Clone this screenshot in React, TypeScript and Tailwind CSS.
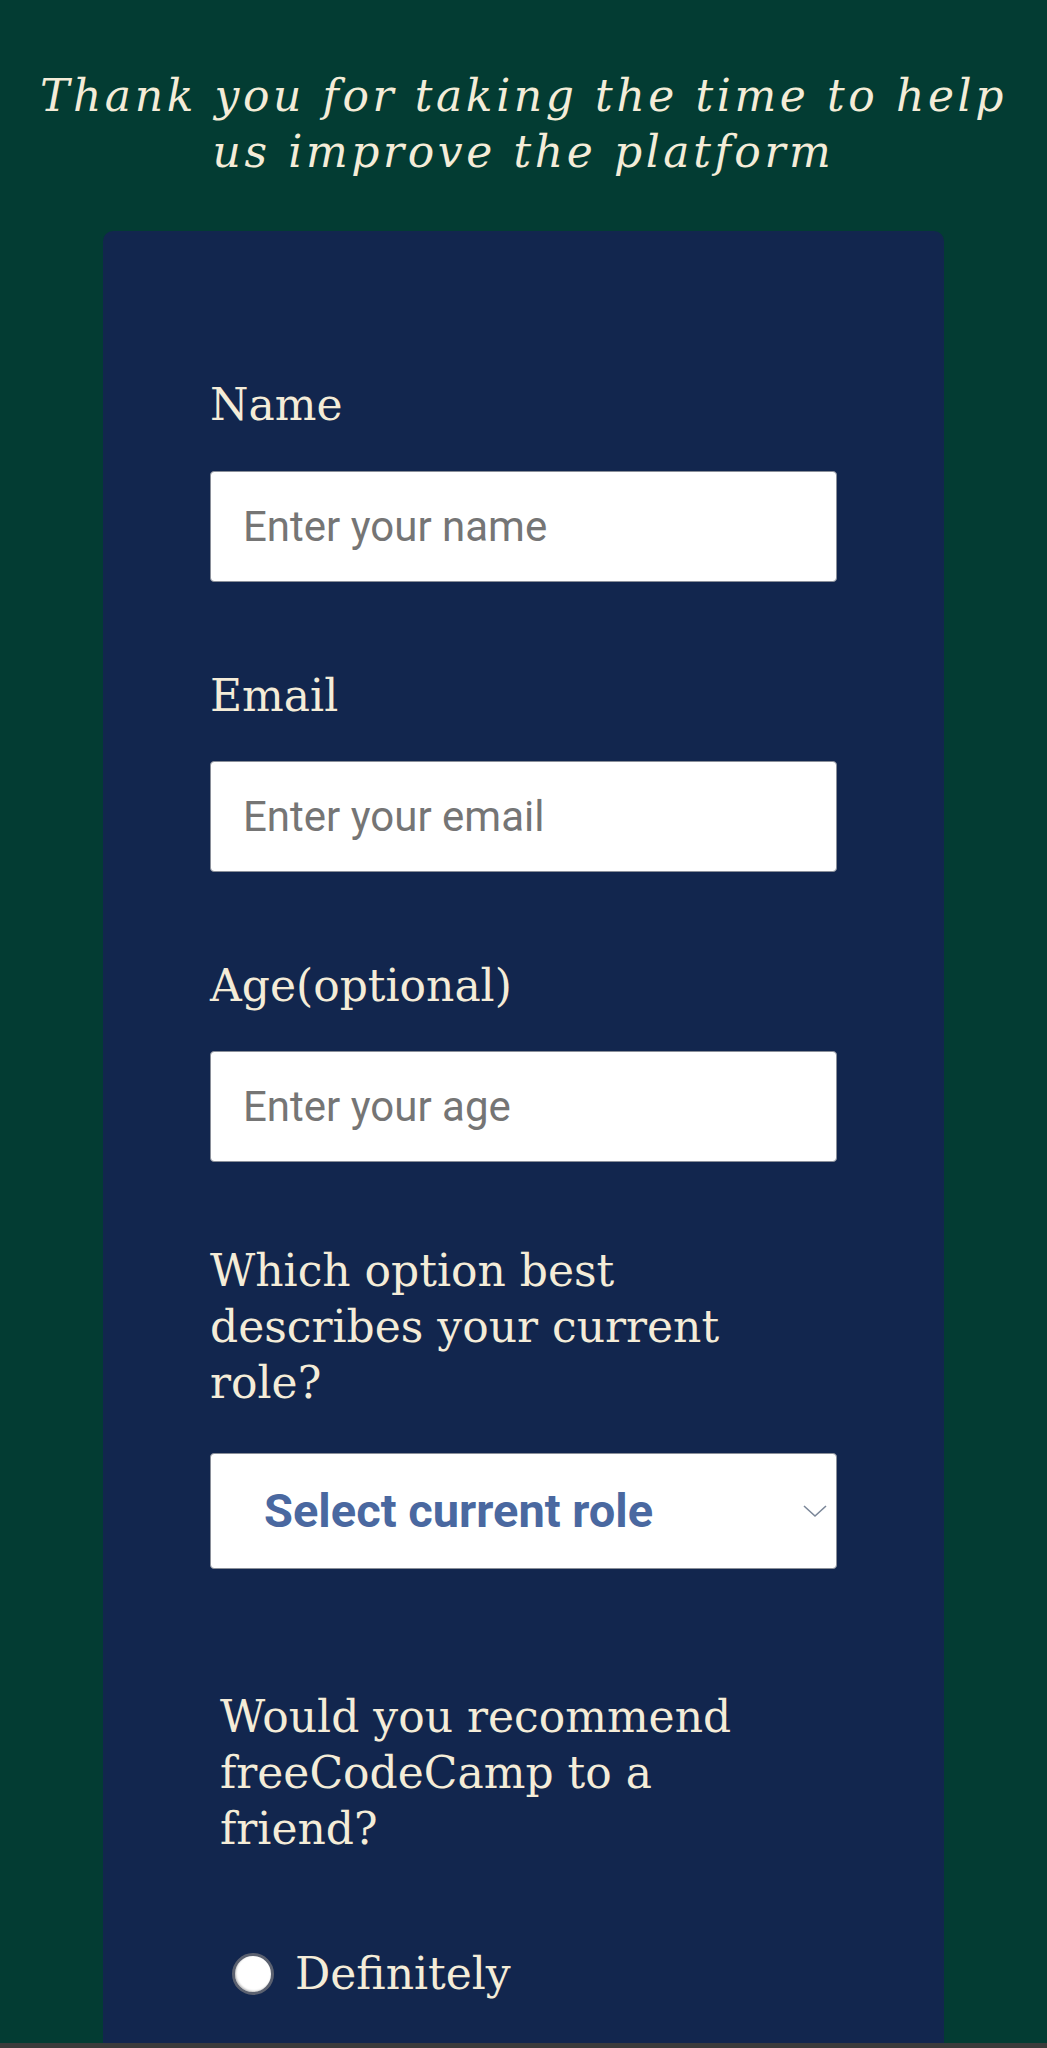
import React from 'react';

const serif = "font-['DejaVu_Serif',serif]";
const roboto = "font-['Roboto',sans-serif]";

const Label: React.FC<{ htmlFor: string; children: React.ReactNode; className?: string }> = ({ htmlFor, children, className }) => (
  <label htmlFor={htmlFor} className={`block ${serif} text-[44px] leading-[56px] text-[#f4ecd8] ${className || ''}`}>
    {children}
  </label>
);

const TextInput: React.FC<{ id: string; type: string; placeholder: string }> = ({ id, type, placeholder }) => (
  <input
    id={id}
    type={type}
    placeholder={placeholder}
    className={`block w-full h-[111px] px-[32px] bg-white rounded-[4px] border border-[#8a8f99] ${roboto} text-[42px] text-[#222] placeholder:text-[#757575] outline-none`}
  />
);

export default function App() {
  return (
    <div className="h-[2048px] flex flex-col overflow-hidden bg-[#033c33]">
      <div className="flex-1 overflow-hidden">
        {/* Header */}
        <h1 className={`pt-[68px] px-4 text-center ${serif} italic font-normal text-[44px] leading-[56px] tracking-[3.6px] text-[#f4ecd8]`}>
          Thank you for taking the time to help us improve the platform
        </h1>

        {/* Survey card */}
        <form className="mx-[103px] mt-[51px] bg-[#12264e] rounded-[10px] pt-[146px] pb-20 px-[107px]">
          <Label htmlFor="name">Name</Label>
          <div className="mt-[38px]">
            <TextInput id="name" type="text" placeholder="Enter your name" />
          </div>

          <Label htmlFor="email" className="mt-[86px]">Email</Label>
          <div className="mt-[37px]">
            <TextInput id="email" type="email" placeholder="Enter your email" />
          </div>

          <Label htmlFor="age" className="mt-[86px]">Age(optional)</Label>
          <div className="mt-[37px]">
            <TextInput id="age" type="number" placeholder="Enter your age" />
          </div>

          <Label htmlFor="role" className="mt-[81px]">Which option best describes your current role?</Label>
          <div className="relative mt-[42px]">
            <select
              id="role"
              defaultValue=""
              className={`block w-full h-[116px] pl-[53px] pr-16 appearance-none bg-white rounded-[4px] border border-[#8a8f99] ${roboto} font-bold text-[47px] text-[#4a68a0] outline-none`}
            >
              <option value="" disabled>Select current role</option>
              <option value="student">Student</option>
              <option value="full-time">Full Time Job</option>
              <option value="learner">Full Time Learner</option>
              <option value="other">Other</option>
            </select>
            <svg
              className="absolute right-[10px] top-1/2 -translate-y-1/2 pointer-events-none"
              width="24"
              height="14"
              viewBox="0 0 24 14"
              fill="none"
              stroke="#7a8698"
              strokeWidth="1.6"
            >
              <path d="M1 2l11 10L23 2" />
            </svg>
          </div>

          <fieldset className="mt-[120px] pl-[10px] w-[570px]">
            <legend className={`${serif} text-[44px] leading-[56px] text-[#f4ecd8]`}>
              Would you recommend freeCodeCamp to a friend?
            </legend>
            <label className={`mt-[89px] flex items-center pl-[12px] gap-[21px] ${serif} text-[44px] leading-[56px] text-[#f4ecd8]`}>
              <input
                type="radio"
                name="recommend"
                value="definitely"
                className="appearance-none w-[42px] h-[42px] rounded-full bg-white border-[3px] border-[#5b6170] shadow-[inset_1px_-1px_2px_rgba(0,0,0,0.25)]"
              />
              Definitely
            </label>
          </fieldset>
        </form>
      </div>
      <div className="h-[5px] bg-[#3b3b3b]" />
    </div>
  );
}
